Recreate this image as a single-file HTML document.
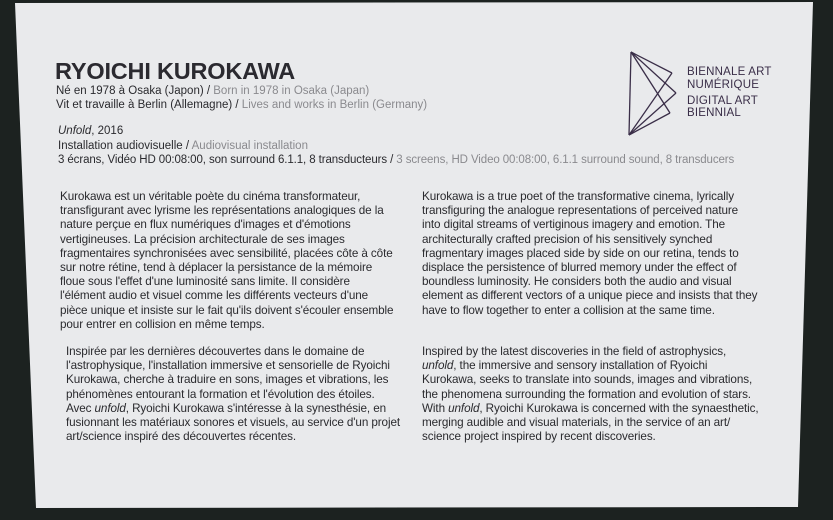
<!DOCTYPE html>
<html><head><meta charset="utf-8"><style>
html,body{margin:0;padding:0;}
body{width:833px;height:520px;background:#1c2220;position:relative;overflow:hidden;font-family:"Liberation Sans",sans-serif;}
.card{position:absolute;left:0;top:0;width:833px;height:520px;background:#e9eaec;clip-path:polygon(15px 3px,813px 2px,798px 507px,36px 508px);}
.t{position:absolute;white-space:nowrap;color:#2a2a2e;}
.g{color:#8a8a8e;}
.p{position:absolute;font-size:11.7px;line-height:14.2px;color:#2a2a2e;letter-spacing:-0.1px;white-space:nowrap;}
.lg{position:absolute;left:687px;font-size:11.5px;color:#3a2e48;letter-spacing:0.2px;white-space:nowrap;}
</style></head><body>
<div class="card"></div>
<div class="t" style="left:55px;top:58px;font-size:23.5px;font-weight:bold;letter-spacing:-0.2px;color:#2b2a30">RYOICHI KUROKAWA</div>
<div class="t" style="left:56px;top:85px;font-size:11.5px">Né en 1978 à Osaka (Japon) / <span class="g">Born in 1978 in Osaka (Japan)</span></div>
<div class="t" style="left:56px;top:99px;font-size:11.5px">Vit et travaille à Berlin (Allemagne) / <span class="g">Lives and works in Berlin (Germany)</span></div>
<div class="t" style="left:58px;top:125px;font-size:11.5px"><i>Unfold</i>, 2016</div>
<div class="t" style="left:58px;top:140px;font-size:11.5px">Installation audiovisuelle / <span class="g">Audiovisual installation</span></div>
<div class="t" style="left:58px;top:154px;font-size:11.5px;letter-spacing:-0.1px">3 écrans, Vidéo HD 00:08:00, son surround 6.1.1, 8 transducteurs / <span class="g">3 screens, HD Video 00:08:00, 6.1.1 surround sound, 8 transducers</span></div>

<svg style="position:absolute;left:0;top:0" width="833" height="520">
<g stroke="#3a2e48" stroke-width="1.3" fill="none">
<line x1="631" y1="52" x2="629" y2="135"/>
<line x1="631" y1="52" x2="672" y2="73"/>
<line x1="631" y1="52" x2="676" y2="93"/>
<line x1="631" y1="52" x2="670" y2="113"/>
<line x1="629" y1="135" x2="672" y2="73"/>
<line x1="629" y1="135" x2="676" y2="93"/>
<line x1="629" y1="135" x2="670" y2="113"/>
</g></svg>
<div class="lg" style="top:66px">BIENNALE ART</div>
<div class="lg" style="top:79px">NUMÉRIQUE</div>
<div class="lg" style="top:95px">DIGITAL ART</div>
<div class="lg" style="top:107px">BIENNIAL</div>

<div class="p" style="left:60px;top:190px">Kurokawa est un véritable poète du cinéma transformateur,<br>transfigurant avec lyrisme les représentations analogiques de la<br>nature perçue en flux numériques d'images et d'émotions<br>vertigineuses. La précision architecturale de ses images<br>fragmentaires synchronisées avec sensibilité, placées côte à côte<br>sur notre rétine, tend à déplacer la persistance de la mémoire<br>floue sous l'effet d'une luminosité sans limite. Il considère<br>l'élément audio et visuel comme les différents vecteurs d'une<br>pièce unique et insiste sur le fait qu'ils doivent s'écouler ensemble<br>pour entrer en collision en même temps.</div>
<div class="p" style="left:422px;top:190px">Kurokawa is a true poet of the transformative cinema, lyrically<br>transfiguring the analogue representations of perceived nature<br>into digital streams of vertiginous imagery and emotion. The<br>architecturally crafted precision of his sensitively synched<br>fragmentary images placed side by side on our retina, tends to<br>displace the persistence of blurred memory under the effect of<br>boundless luminosity. He considers both the audio and visual<br>element as different vectors of a unique piece and insists that they<br>have to flow together to enter a collision at the same time.</div>
<div class="p" style="left:66px;top:345px">Inspirée par les dernières découvertes dans le domaine de<br>l'astrophysique, l'installation immersive et sensorielle de Ryoichi<br>Kurokawa, cherche à traduire en sons, images et vibrations, les<br>phénomènes entourant la formation et l'évolution des étoiles.<br>Avec <i>unfold</i>, Ryoichi Kurokawa s'intéresse à la synesthésie, en<br>fusionnant les matériaux sonores et visuels, au service d'un projet<br>art/science inspiré des découvertes récentes.</div>
<div class="p" style="left:422px;top:345px">Inspired by the latest discoveries in the field of astrophysics,<br><i>unfold</i>, the immersive and sensory installation of Ryoichi<br>Kurokawa, seeks to translate into sounds, images and vibrations,<br>the phenomena surrounding the formation and evolution of stars.<br>With <i>unfold</i>, Ryoichi Kurokawa is concerned with the synaesthetic,<br>merging audible and visual materials, in the service of an art/<br>science project inspired by recent discoveries.</div>
</body></html>
